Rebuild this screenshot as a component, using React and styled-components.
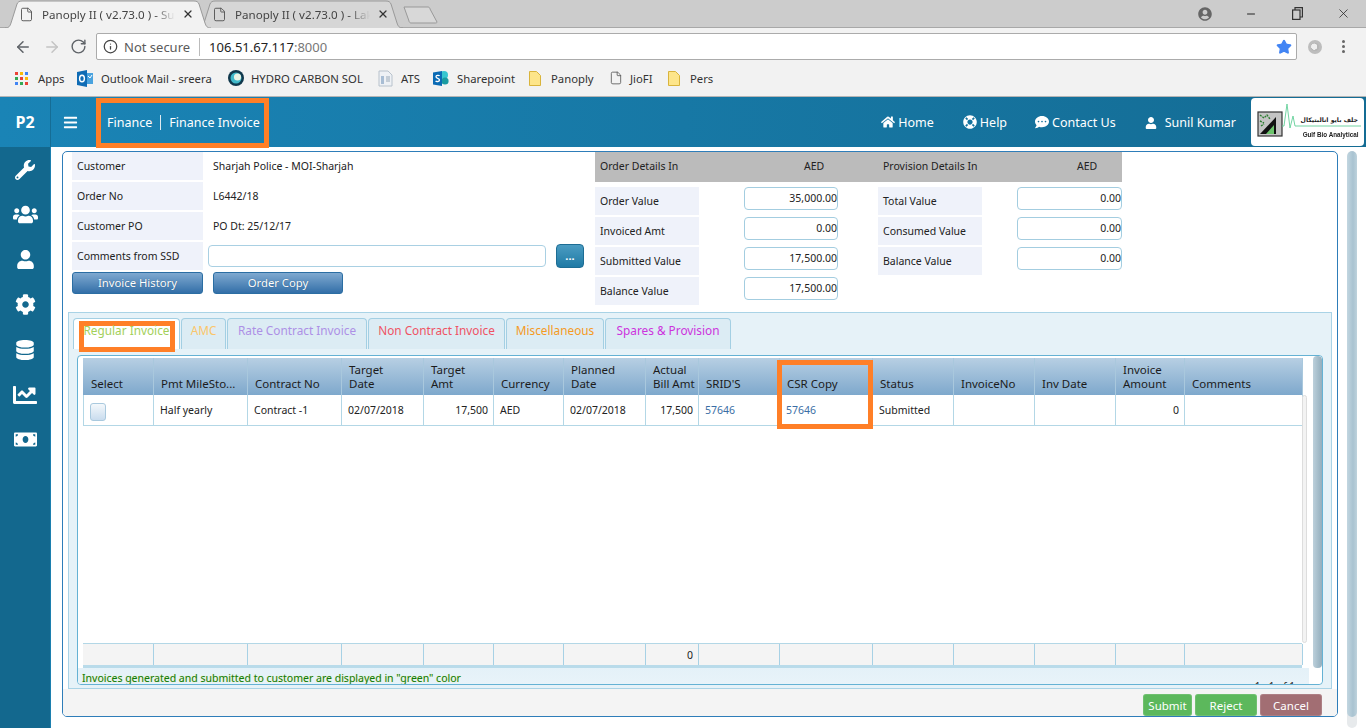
import React from "react";
import styled, { createGlobalStyle } from "styled-components";
import { FaWrench, FaUsers, FaUser, FaCog, FaDatabase, FaChartLine, FaMoneyBill, FaHome, FaLifeRing, FaCommentDots, FaBars, FaUserCircle } from "react-icons/fa";
import { File, ArrowLeft, ArrowRight, RotateCw, Info, Star, X, Minus } from "lucide-react";

const Global = createGlobalStyle`
  html, body { margin: 0; padding: 0; background: #fff; }
  body { font-family: "Noto Sans", "Liberation Sans", sans-serif; width: 1366px; height: 728px; overflow: hidden; }
  * { box-sizing: border-box; }
`;

const Page = styled.div`
  width: 1366px; height: 728px; display: flex; flex-direction: column; overflow: hidden;
`;

/* browser chrome */
const TabStrip = styled.div`
  height: 28px; background: #cccccc; display: flex; align-items: flex-end; padding-left: 5px; position: relative;
  border-bottom: 1px solid #a8a8a8;
`;
const BrowserTab = styled.div`
  position: relative; width: ${p => p.$w}px; height: 28px; margin-left: ${p => p.$ml || 0}px; z-index: ${p => p.$z};
  display: flex; align-items: center; padding-left: ${p => p.$pl}px; color: #444; font-size: 11.6px; margin-bottom: -1px;
`;
const TabShape = styled.svg`
  position: absolute; left: 0; top: 0; z-index: -1;
`;
const TabTitle = styled.span`
  width: ${p => p.$w}px; margin-left: 8px; white-space: nowrap;
  -webkit-mask-image: linear-gradient(90deg, #000 85%, transparent);
  mask-image: linear-gradient(90deg, #000 85%, transparent);
`;
const TabClose = styled.span`
  margin-left: 7px; display: flex; color: #333;
`;
const NewTab = styled.svg`
  margin-left: 0; margin-bottom: 3px; flex: none;
`;
const WindowButtons = styled.div`
  margin-left: auto; height: 27px; display: flex; align-items: center; color: #444;
`;
const WinBtn = styled.div`
  width: 46px; display: flex; justify-content: center; align-items: center;
`;

const Toolbar = styled.div`
  height: 34px; background: #f2f2f2; display: flex; align-items: center; padding: 3px 0 0 14px; color: #5f6368;
`;
const NavBtn = styled.div`
  width: ${p => p.$w || 28}px; display: flex; color: ${p => p.$off ? "#c4c4c4" : "#5f6368"};
`;
const Omnibox = styled.div`
  width: 1201px; margin-left: -2px; height: 27px; background: #fff; border: 1px solid #ababab; border-radius: 2px;
  display: flex; align-items: center; padding-left: 6px; font-size: 13px; color: #222;
`;
const NotSecure = styled.span`
  margin-left: 6px; color: #5a5a5a; padding-right: 9px; border-right: 1px solid #bbb; line-height: 18px; font-size: 13px;
`;
const Url = styled.span`
  margin-left: 9px;
  & > em { font-style: normal; color: #777; }
`;
const StarSlot = styled.span`
  margin-left: auto; margin-right: 4px; display: flex;
`;
const ExtCircle = styled.span`
  width: 14px; height: 14px; border-radius: 50%; margin-left: 11px; border: 3px solid #bdbdbd;
  background: radial-gradient(circle at 40% 45%, #eee 0 45%, #b5b5b5 50%);
`;
const Kebab = styled.span`
  margin-left: 20px; display: flex; flex-direction: column; gap: 2px;
  & > i { width: 3px; height: 3px; border-radius: 50%; background: #666; }
`;

const Bookmarks = styled.div`
  height: 35px; background: #f2f2f2; border-bottom: 1px solid #b5b5b5; display: flex; align-items: center;
  padding: 0 0 2px 15px; font-size: 11.3px; color: #333;
`;
const Mark = styled.div`
  width: ${p => p.$w}px; display: flex; align-items: center; white-space: nowrap; flex: none;
`;
const MarkLabel = styled.span`
  margin-left: ${p => p.$ml}px;
`;

/* app header */
const AppHeader = styled.header`
  height: 50px; display: flex; align-items: center; color: #fff; position: relative;
  background: linear-gradient(90deg, #1a84b6 0%, #146c94 100%);
`;
const Brand = styled.div`
  width: 51px; height: 100%; display: flex; align-items: center; justify-content: center; font-weight: 700; font-size: 16px;
  border-right: 1px solid #156d95;
`;
const Burger = styled.div`
  width: 40px; display: flex; justify-content: center; padding-right: 1px;
`;
const Crumb = styled.div`
  font-size: 12.5px; margin-left: 16px; display: flex; align-items: center; white-space: nowrap;
  & > i { width: 1px; height: 15px; background: #dfeaf0; margin: 0 8px 0 8px; }
`;
const HeaderNav = styled.nav`
  margin-left: auto; display: flex; align-items: center; font-size: 12.5px;
`;
const NavLink = styled.span`
  display: flex; align-items: center; gap: 3px; margin-right: ${p => p.$mr}px;
`;
const UserName = styled.span`
  display: flex; align-items: center; gap: 8px; margin-right: 15px; margin-top: 1px;
`;
const LogoBox = styled.div`
  width: 113px; height: 48px; background: #fff; border-radius: 4px; margin-right: 2px; position: relative;
  display: flex; flex-direction: column; align-items: flex-end; padding: 16px 6px 0 0; color: #222; overflow: hidden;
`;
const LogoArt = styled.svg`
  position: absolute; left: 0; top: 0;
`;
const LogoArabic = styled.span`
  font-family: "DejaVu Sans", sans-serif; font-size: 6.2px; line-height: 12px; font-weight: 700; position: relative;
`;
const LogoName = styled.span`
  font-family: "Liberation Sans", sans-serif; font-size: 7.5px; font-weight: 700; line-height: 12px; margin-top: 3px; position: relative;
  transform: scaleX(.84); transform-origin: right center; white-space: nowrap;
`;
const Annot = styled.div`
  position: absolute; border: 5px solid #ff7f27; pointer-events: none; z-index: ${p => p.$z || 5};
`;
const CrumbBox = styled(Annot)`
  left: 96px; top: 1px; width: 173px; height: 50px;
`;

/* shell */
const Body = styled.div`
  flex: 1; display: flex; min-height: 0;
`;
const Sidebar = styled.aside`
  width: 51px; background: #13688e; border-right: 1px solid #1c7fae; display: flex; flex-direction: column; align-items: center;
  padding-top: 0; color: #fff;
`;
const SideItem = styled.div`
  height: 45px; display: flex; align-items: center; justify-content: center; width: 100%;
`;
const Main = styled.main`
  flex: 1; display: flex; padding: 4px 0 0 11px; min-width: 0;
`;
const Panel = styled.section`
  width: 1276px; height: 566px; border: 1px solid #2e7db9; border-radius: 5px; display: flex; flex-direction: column; background: #fff; overflow: hidden;
`;
const PageScroll = styled.div`
  width: 10px; margin-left: 9px; height: 577px; border-radius: 5px; overflow: hidden; background: #e7eaec;
  display: flex; flex-direction: column;
  & > div { height: 566px; background: linear-gradient(90deg, #c2d6e0, #a9c3d1 60%, #bdd2dc); border-radius: 5px; }
`;
const Top = styled.div`
  height: 160px; display: flex; padding-left: 9px; font-size: 10.5px; color: #222;
`;
const LeftInfo = styled.div`
  width: 523px; display: flex; flex-direction: column; gap: 2px;
`;
const InfoRow = styled.div`
  display: flex; align-items: center; height: 28px;
`;
const InfoLabel = styled.div`
  width: ${p => p.$w || 131}px; height: 28px; background: #eff2fa; display: flex; align-items: center; padding-left: 5px; flex: none;
  white-space: nowrap;
`;
const InfoValue = styled.div`
  margin-left: 10px;
`;
const TextBox = styled.div`
  width: 338px; height: 22px; margin-left: 5px; border: 1px solid #a9d0e3; border-radius: 4px; background: #fff;
`;
const DotsBtn = styled.button`
  width: 28px; height: 24px; margin-left: 10px; border-radius: 4px; border: 1px solid #1d6d94; color: #fff; font-weight: 700; font-size: 11px; padding: 0 0 2px;
  background: linear-gradient(180deg, #4b9cc2, #1f7aa5); font-family: inherit;
`;
const BtnRow = styled.div`
  display: flex; gap: 10px;
`;
const BlueBtn = styled.button`
  width: ${p => p.$w}px; height: 22px; border-radius: 3px; border: 1px solid #2b6ea3; color: #fff; font-size: 11.3px; padding: 0 0 1px;
  background: linear-gradient(180deg, #7fa9d0, #336fa8); font-family: inherit; text-shadow: 0 0 1px #20517c;
`;
const RightInfo = styled.div`
  width: 527px;
`;
const GrayHead = styled.div`
  height: 30px; background: #bbbbbb; display: grid; grid-template-columns: 149px 134px 145px 99px; align-items: center; font-size: 10.5px; margin-bottom: 5px; padding-bottom: 2px;
`;
const GrayCell = styled.span`
  padding-left: ${p => p.$pl || 0}px;
`;
const Columns = styled.div`
  display: flex; gap: 40px;
`;
const ValueCol = styled.div`
  width: ${p => p.$w}px; display: flex; flex-direction: column; gap: 2px;
`;
const ValueRow = styled.div`
  display: flex; justify-content: space-between; height: 28px;
`;
const NumBox = styled.div`
  width: ${p => p.$w}px; height: 23px; border: 1px solid #a3cde0; border-radius: 4px; background: #fff; text-align: right; line-height: 20px; font-size: 10.5px;
`;

const TabPanel = styled.div`
  margin: 0 0 0 5px; width: 1264px; height: 377px; background: #e6f2f8; border: 1px solid #a9d3e6; padding: 5px 8px 3px 4px; display: flex; flex-direction: column; position: relative;
`;
const TabsRow = styled.div`
  display: flex; height: 31px; gap: 1px; font-size: 11.8px;
`;
const InvTab = styled.div`
  width: ${p => p.$w}px; border: 1px solid #a3cfe3; border-bottom: 0; border-radius: 4px 4px 0 0; text-align: center; line-height: 22px; height: 31px;
  background: ${p => p.$active ? "#fff" : "#dcecf4"}; color: ${p => p.$c}; position: relative; white-space: nowrap;
`;
const TabText = styled.span`
  position: relative; z-index: 2;
`;
const TabMark = styled(Annot)`
  left: 5px; top: 2px; width: 96px; height: 31px; z-index: 1;
`;
const GridShell = styled.div`
  margin: 6px 0 0 4px; flex: 1; border: 1px solid #65b2d4; border-radius: 4px; background: #fff; display: flex; position: relative; min-height: 0; overflow: hidden;
`;
const GridMain = styled.div`
  flex: 1; display: flex; flex-direction: column; padding-top: 2px; min-width: 0; font-size: 10.5px; color: #222;
`;
const GridTrack = styled.div`
  width: 1219px; margin-left: 5px; padding-left: 1px; display: grid; grid-template-columns: 70px 94px 94px 82px 70px 70px 82px 53px 81px 93px 81px 81px 81px 69px 118px;
`;
const HeadRow = styled(GridTrack)`
  height: 37px; background: linear-gradient(180deg, #b7cfe3, #7ea8cc);
`;
const HeadCell = styled.div`
  padding: 0 0 4px 7px; border-right: 1px solid #a9c8dd; display: flex; align-items: flex-end; font-size: 11.5px; line-height: 14px; color: #1c1c1c; white-space: pre-line;
`;
const DataRow = styled(GridTrack)`
  height: 31px; padding-left: 0; border-bottom: 1px solid #b3d7e6; border-left: 1px solid #b3d7e6;
`;
const DataCell = styled.div`
  display: flex; align-items: center; padding: 0 5px 0 6px; border-right: 1px solid #b3d7e6; justify-content: ${p => p.$right ? "flex-end" : "flex-start"};
  color: ${p => p.$link ? "#3a6ea5" : "inherit"};
`;
const CheckBox = styled.span`
  width: 16px; height: 18px; border: 1px solid #a9c9de; border-radius: 3px; background: linear-gradient(180deg, #f4f8fb, #c9dcee); margin-top: 4px;
`;
const GridBlank = styled.div`
  flex: 1; position: relative;
`;
const RowScroll = styled.div`
  position: absolute; left: 1224px; top: -31px; bottom: 0; width: 5px; border: 1px solid #ddd; border-radius: 3px; background: #f3f3f3;
`;
const FootRow = styled(GridTrack)`
  height: 25px; background: #f4f4f4; border-top: 1px solid #b3d7e6; border-bottom: 3px solid #b9dbea;
`;
const FootCell = styled.div`
  border-right: 1px solid #a7d1e5; display: flex; align-items: center; justify-content: flex-end; padding-right: 5px;
`;
const Pager = styled.div`
  height: 16px; width: 1231px; background: linear-gradient(180deg, #e4f1f8, #e8f3f9); display: flex; justify-content: space-between; padding: 3px 0 0 4px; overflow: hidden; line-height: 14px;
`;
const GreenNote = styled.span`
  color: #0e7c0e; text-shadow: 0 0 1px #e3e38a; font-size: 10.5px;
`;
const PagerInfo = styled.span`
  margin: 8px 14px 0 0; font-size: 10px;
`;
const GridThumb = styled.div`
  width: 9px; background: #fff; border-radius: 4px; display: flex; flex-direction: column; flex: none;
  & > div { height: 312px; border-radius: 4px; background: linear-gradient(90deg, #bcd0db, #93aebd); }
`;
const CsrBox = styled(Annot)`
  left: 708px; top: 47px; width: 96px; height: 69px; z-index: 7;
`;
const ActionBar = styled.div`
  flex: 1; background: #f4f4f4; display: flex; justify-content: flex-end; gap: 3px; padding: 5px 15px 0 0;
`;
const ActionBtn = styled.button`
  width: ${p => p.$w}px; height: 22px; border: 0; border-radius: 3px; color: #fff; background: ${p => p.$bg}; font-size: 11.5px; font-family: inherit; padding: 0; box-shadow: inset 0 0 0 1px rgba(255,255,255,.12);
`;

const DocIcon = () => <File size={15} strokeWidth={1.5} color="#555" />;

const Tab = ({ w, title, ml, z, pl, fill, tw, path }) => (
  <BrowserTab $w={w} $ml={ml} $z={z} $pl={pl}>
    <TabShape width={w} height="28" viewBox={`0 0 ${w} 28`}>
      <path d={path} fill={fill} stroke="#999" />
    </TabShape>
    <DocIcon />
    <TabTitle $w={tw}>{title}</TabTitle>
    <TabClose><X size={12} strokeWidth={2.5} /></TabClose>
  </BrowserTab>
);

const Grid9 = () => (
  <svg width="13" height="13" viewBox="0 0 13 13">
    {[0, 5, 10].flatMap((y, r) => [0, 5, 10].map((x, c) => (
      <rect key={`${r}${c}`} x={x} y={y} width="3" height="3" fill={["#ea4335", "#fbbc05", "#4285f4", "#34a853", "#ea4335", "#fbbc05", "#4285f4", "#34a853", "#ea4335"][r * 3 + c]} />
    )))}
  </svg>
);
const Outlook = () => (
  <svg width="16" height="17" viewBox="0 0 16 17">
    <path d="M6 3h10v11H6z" fill="#4aa3df" /><path d="M0 2l10-2v17L0 15z" fill="#0f6cb5" />
    <ellipse cx="5" cy="8.5" rx="2.4" ry="3.2" fill="none" stroke="#fff" strokeWidth="1.4" />
    <path d="M11 6l2 2 2-3" stroke="#fff" fill="none" />
  </svg>
);
const Hydro = () => (
  <svg width="16" height="16" viewBox="0 0 16 16">
    <circle cx="8" cy="8" r="8" fill="#10384c" /><circle cx="8" cy="8" r="5.5" fill="#3fb8c9" /><circle cx="9.5" cy="7" r="3.6" fill="#e9f2e4" />
  </svg>
);
const Ats = () => (
  <svg width="15" height="17" viewBox="0 0 15 17">
    <path d="M1 1h9l4 4v11H1z" fill="#eef1f5" stroke="#b8c2cc" /><path d="M3 6h3v8H3z" fill="#a8bdd4" /><path d="M8 7h4M8 9h4M8 11h4" stroke="#9aa9b8" />
  </svg>
);
const Share = () => (
  <svg width="16" height="17" viewBox="0 0 16 17">
    <circle cx="11" cy="5" r="4" fill="#37c6d0" /><circle cx="12" cy="11" r="3.6" fill="#1a9ba1" /><path d="M0 2.5L9 1v15l-9-1.5z" fill="#0b6bb5" />
    <path d="M6.5 6C6 5 3 5 3 6.7S6.5 8.3 6.5 10 3.5 12 2.6 10.8" stroke="#fff" strokeWidth="1.3" fill="none" />
  </svg>
);
const Folder = () => (
  <svg width="12" height="15" viewBox="0 0 12 15">
    <path d="M.5.5h7l4 4v10H.5z" fill="#fde58a" stroke="#d9b43c" />
  </svg>
);
const Restore = () => (
  <svg width="11" height="13" viewBox="0 0 11 13" fill="none" stroke="#333" strokeWidth="1.2">
    <rect x=".6" y="3" width="7.4" height="9.4" /><path d="M3 3V.6h7.4v9.4H8" />
  </svg>
);
const GulfArt = () => (
  <LogoArt width="113" height="48" viewBox="0 0 113 48">
    <rect x="7" y="14" width="24" height="24" fill="#c4c4c4" stroke="#333" strokeWidth="1.2" />
    <path d="M9 36L25 19v17z" fill="#111" />
    <path d="M15 36L23 27v9z" fill="#6cc46c" />
    <path d="M9 17l4 3 3-3 3 4M9 23l4 2M10 28l3-2" stroke="#2e7d32" strokeWidth="1.4" fill="none" strokeDasharray="2 1" />
    <path d="M31 28h2l3-22 3 24 3-12 2 10 1 0h65" fill="none" stroke="#63cf98" strokeWidth=".9" />
  </LogoArt>
);

const columns = [
  ["Select"], ["Pmt MileSto..."], ["Contract No"], ["Target\nDate"], ["Target\nAmt"], ["Currency"], ["Planned\nDate"], ["Actual\nBill Amt"], ["SRID'S"], ["CSR Copy"], ["Status"], ["InvoiceNo"], ["Inv Date"], ["Invoice\nAmount"], ["Comments"],
];
const invoiceTabs = [
  ["Regular Invoice", 107, "#a3d05a", true], ["AMC", 45, "#fbc66a"], ["Rate Contract Invoice", 140, "#ad90e6"], ["Non Contract Invoice", 137, "#ef5364"], ["Miscellaneous", 98, "#f59a23"], ["Spares & Provision", 126, "#cc33dd"],
];
const sideIcons = [[FaWrench, 20], [FaUsers, 25], [FaUser, 19], [FaCog, 21], [FaDatabase, 20], [FaChartLine, 24], [FaMoneyBill, 23]];

export default function App() {
  return (
    <Page>
      <Global />
      <TabStrip>
        <Tab w={206} z={3} pl={14} fill="#f2f2f2" tw={133} title="Panoply II ( v2.73.0 ) - Sur" path="M0 28 C4 28 5 26 6 23 L12 4 C13 2 14 1 17 1 H189 C192 1 193 2 194 4 L200 23 C201 26 202 28 206 28" />
        <Tab w={205} ml={-13} z={2} pl={14} fill="#d6d6d6" tw={135} title="Panoply II ( v2.73.0 ) - Lak" path="M0 28 C4 28 5 26 6 23 L12 4 C13 2 14 1 17 1 H188 C191 1 192 2 193 4 L199 23 C200 26 201 28 205 28" />
        <NewTab width="35" height="18" viewBox="0 0 35 18">
          <path d="M1 1h24c1 0 2 1 2 2l7 13c0 1-1 1-2 1H8c-1 0-2-1-2-2z" fill="#d8d8d8" stroke="#999" />
        </NewTab>
        <WindowButtons>
          <WinBtn><FaUserCircle size={14} color="#666" /></WinBtn>
          <WinBtn><Minus size={12} color="#222" /></WinBtn>
          <WinBtn><Restore /></WinBtn>
          <WinBtn><X size={15} strokeWidth={1.2} color="#222" /></WinBtn>
        </WindowButtons>
      </TabStrip>
      <Toolbar>
        <NavBtn $w={29}><ArrowLeft size={18} strokeWidth={2} /></NavBtn>
        <NavBtn $w={27} $off><ArrowRight size={18} strokeWidth={2} /></NavBtn>
        <NavBtn $w={28}><RotateCw size={17} strokeWidth={2} /></NavBtn>
        <Omnibox>
          <Info size={15} color="#444" />
          <NotSecure>Not secure</NotSecure>
          <Url>106.51.67.117<em>:8000</em></Url>
          <StarSlot><Star size={16} color="#4285f4" fill="#4285f4" /></StarSlot>
        </Omnibox>
        <ExtCircle />
        <Kebab><i /><i /><i /></Kebab>
      </Toolbar>
      <Bookmarks>
        <Mark $w={62}><Grid9 /><MarkLabel $ml={10}>Apps</MarkLabel></Mark>
        <Mark $w={151}><Outlook /><MarkLabel $ml={8}>Outlook Mail - sreera</MarkLabel></Mark>
        <Mark $w={150}><Hydro /><MarkLabel $ml={7}>HYDRO CARBON SOL</MarkLabel></Mark>
        <Mark $w={55}><Ats /><MarkLabel $ml={8}>ATS</MarkLabel></Mark>
        <Mark $w={96}><Share /><MarkLabel $ml={8}>Sharepoint</MarkLabel></Mark>
        <Mark $w={80}><Folder /><MarkLabel $ml={10}>Panoply</MarkLabel></Mark>
        <Mark $w={59}><File size={14} strokeWidth={1.4} color="#555" /><MarkLabel $ml={7}>JioFI</MarkLabel></Mark>
        <Mark $w={50}><Folder /><MarkLabel $ml={10}>Pers</MarkLabel></Mark>
      </Bookmarks>
      <AppHeader>
        <Brand>P2</Brand>
        <Burger><FaBars size={15} /></Burger>
        <Crumb>Finance<i />Finance Invoice</Crumb>
        <CrumbBox />
        <HeaderNav>
          <NavLink $mr={29}><FaHome size={14} />Home</NavLink>
          <NavLink $mr={28}><FaLifeRing size={14} />Help</NavLink>
          <NavLink $mr={29}><FaCommentDots size={14} />Contact Us</NavLink>
          <UserName><FaUser size={12} />Sunil Kumar</UserName>
          <LogoBox>
            <GulfArt />
            <LogoArabic>جلف بايو انالبتيكال</LogoArabic>
            <LogoName>Gulf Bio Analytical</LogoName>
          </LogoBox>
        </HeaderNav>
      </AppHeader>
      <Body>
        <Sidebar>
          {sideIcons.map(([I, s], i) => <SideItem key={i}><I size={s} /></SideItem>)}
        </Sidebar>
        <Main>
          <Panel>
            <Top>
              <LeftInfo>
                <InfoRow><InfoLabel>Customer</InfoLabel><InfoValue>Sharjah Police - MOI-Sharjah</InfoValue></InfoRow>
                <InfoRow><InfoLabel>Order No</InfoLabel><InfoValue>L6442/18</InfoValue></InfoRow>
                <InfoRow><InfoLabel>Customer PO</InfoLabel><InfoValue>PO Dt: 25/12/17</InfoValue></InfoRow>
                <InfoRow><InfoLabel>Comments from SSD</InfoLabel><TextBox /><DotsBtn>...</DotsBtn></InfoRow>
                <BtnRow><BlueBtn $w={131}>Invoice History</BlueBtn><BlueBtn $w={130}>Order Copy</BlueBtn></BtnRow>
              </LeftInfo>
              <RightInfo>
                <GrayHead>
                  <GrayCell $pl={5}>Order Details In</GrayCell>
                  <GrayCell $pl={60}>AED</GrayCell>
                  <GrayCell $pl={5}>Provision Details In</GrayCell>
                  <GrayCell $pl={54}>AED</GrayCell>
                </GrayHead>
                <Columns>
                  <ValueCol $w={243}>
                    {[["Order Value", "35,000.00"], ["Invoiced Amt", "0.00"], ["Submitted Value", "17,500.00"], ["Balance Value", "17,500.00"]].map(([l, v]) => (
                      <ValueRow key={l}><InfoLabel $w={104}>{l}</InfoLabel><NumBox $w={94}>{v}</NumBox></ValueRow>
                    ))}
                  </ValueCol>
                  <ValueCol $w={244}>
                    {[["Total Value", "0.00"], ["Consumed Value", "0.00"], ["Balance Value", "0.00"]].map(([l, v]) => (
                      <ValueRow key={l}><InfoLabel $w={104}>{l}</InfoLabel><NumBox $w={105}>{v}</NumBox></ValueRow>
                    ))}
                  </ValueCol>
                </Columns>
              </RightInfo>
            </Top>
            <TabPanel>
              <TabsRow>
                {invoiceTabs.map(([t, w, c, a]) => (
                  <InvTab key={t} $w={w} $c={c} $active={a}>
                    {a && <TabMark />}
                    <TabText>{t}</TabText>
                  </InvTab>
                ))}
              </TabsRow>
              <GridShell>
                <GridMain>
                  <HeadRow>{columns.map(([c]) => <HeadCell key={c}>{c}</HeadCell>)}</HeadRow>
                  <DataRow>
                    <DataCell><CheckBox /></DataCell>
                    <DataCell>Half yearly</DataCell>
                    <DataCell>Contract -1</DataCell>
                    <DataCell>02/07/2018</DataCell>
                    <DataCell $right>17,500</DataCell>
                    <DataCell>AED</DataCell>
                    <DataCell>02/07/2018</DataCell>
                    <DataCell $right>17,500</DataCell>
                    <DataCell $link>57646</DataCell>
                    <DataCell $link>57646</DataCell>
                    <DataCell>Submitted</DataCell>
                    <DataCell />
                    <DataCell />
                    <DataCell $right>0</DataCell>
                    <DataCell />
                  </DataRow>
                  <GridBlank><RowScroll /></GridBlank>
                  <FootRow>
                    {columns.map(([c], i) => <FootCell key={c}>{i === 7 ? "0" : ""}</FootCell>)}
                  </FootRow>
                  <Pager>
                    <GreenNote>Invoices generated and submitted to customer are displayed in "green" color</GreenNote>
                    <PagerInfo>1 - 1 of 1</PagerInfo>
                  </Pager>
                </GridMain>
                <GridThumb><div /></GridThumb>
              </GridShell>
              <CsrBox />
            </TabPanel>
            <ActionBar>
              <ActionBtn $w={49} $bg="#5cb85c">Submit</ActionBtn>
              <ActionBtn $w={62} $bg="#5cb85c">Reject</ActionBtn>
              <ActionBtn $w={62} $bg="#a26e73">Cancel</ActionBtn>
            </ActionBar>
          </Panel>
          <PageScroll><div /></PageScroll>
        </Main>
      </Body>
    </Page>
  );
}
